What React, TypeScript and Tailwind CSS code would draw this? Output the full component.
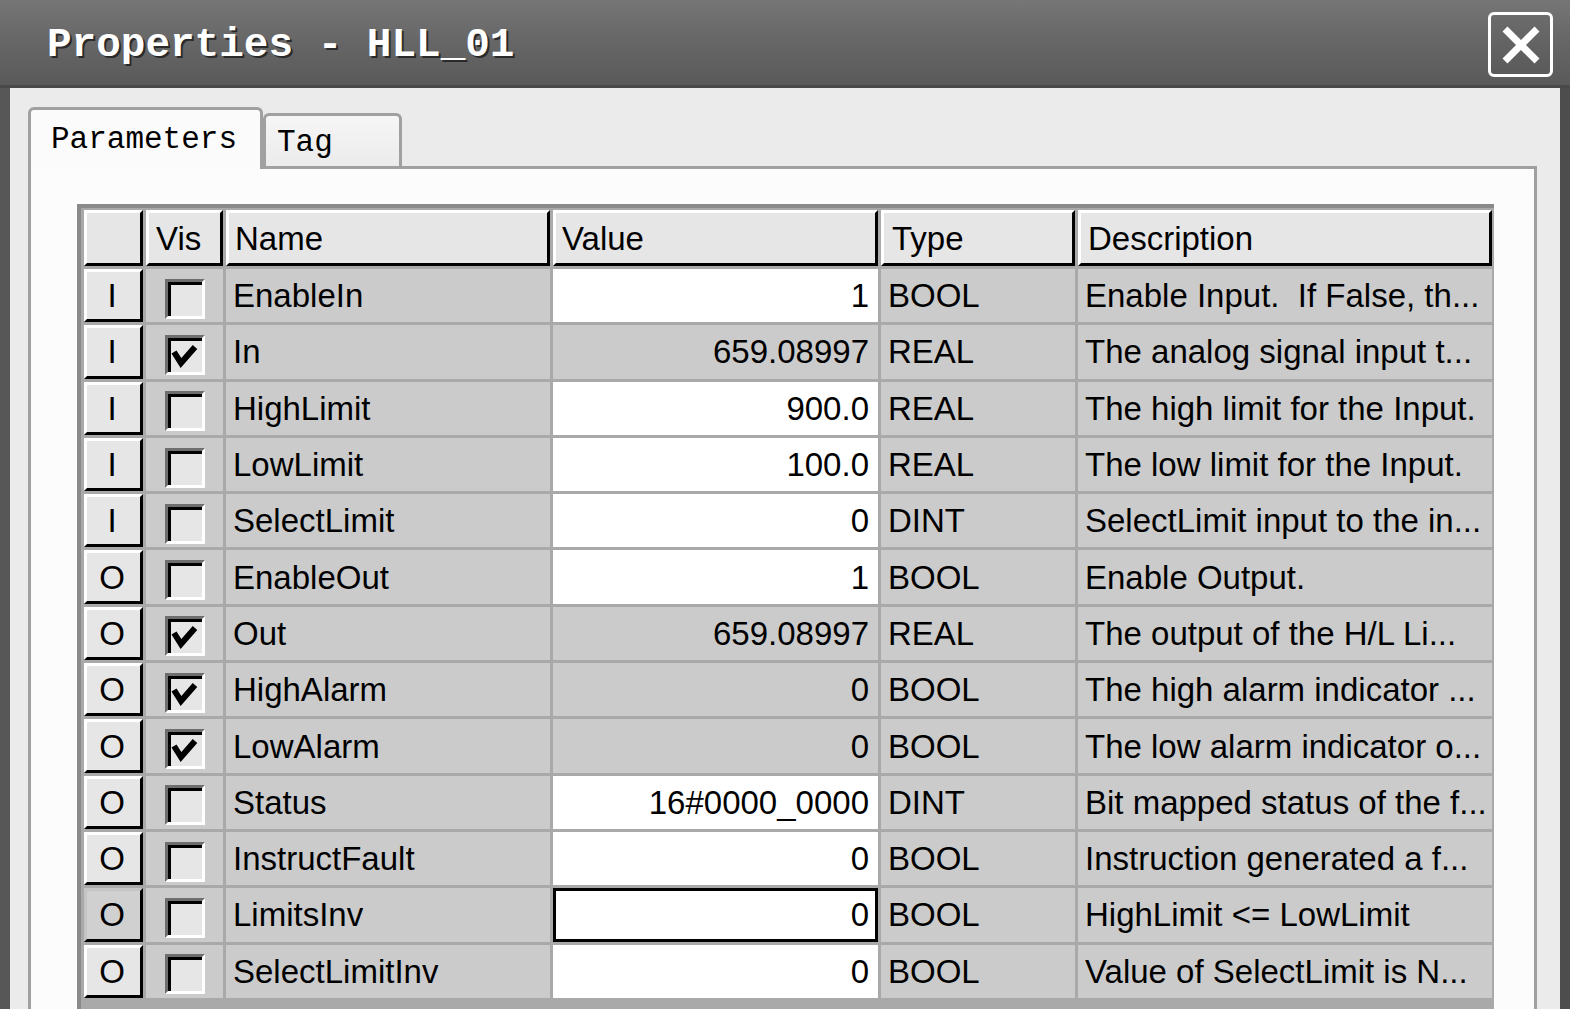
import React from "react";

type Row = {
  io: string;
  vis: boolean;
  name: string;
  value: string;
  editable: boolean;
  type: string;
  desc: string;
  selected?: boolean;
};

const rows: Row[] = [
  { io: "I", vis: false, name: "EnableIn", value: "1", editable: true, type: "BOOL", desc: "Enable Input.  If False, th..." },
  { io: "I", vis: true, name: "In", value: "659.08997", editable: false, type: "REAL", desc: "The analog signal input t..." },
  { io: "I", vis: false, name: "HighLimit", value: "900.0", editable: true, type: "REAL", desc: "The high limit for the Input." },
  { io: "I", vis: false, name: "LowLimit", value: "100.0", editable: true, type: "REAL", desc: "The low limit for the Input." },
  { io: "I", vis: false, name: "SelectLimit", value: "0", editable: true, type: "DINT", desc: "SelectLimit input to the in..." },
  { io: "O", vis: false, name: "EnableOut", value: "1", editable: true, type: "BOOL", desc: "Enable Output." },
  { io: "O", vis: true, name: "Out", value: "659.08997", editable: false, type: "REAL", desc: "The output of the H/L Li..." },
  { io: "O", vis: true, name: "HighAlarm", value: "0", editable: false, type: "BOOL", desc: "The high alarm indicator ..." },
  { io: "O", vis: true, name: "LowAlarm", value: "0", editable: false, type: "BOOL", desc: "The low alarm indicator o..." },
  { io: "O", vis: false, name: "Status", value: "16#0000_0000", editable: true, type: "DINT", desc: "Bit mapped status of the f..." },
  { io: "O", vis: false, name: "InstructFault", value: "0", editable: true, type: "BOOL", desc: "Instruction generated a f..." },
  { io: "O", vis: false, name: "LimitsInv", value: "0", editable: true, type: "BOOL", desc: "HighLimit <= LowLimit", selected: true },
  { io: "O", vis: false, name: "SelectLimitInv", value: "0", editable: true, type: "BOOL", desc: "Value of SelectLimit is N..." },
];

const sans = "font-['Liberation_Sans',Arial,sans-serif]";
const mono = "font-['Liberation_Mono','Courier_New',monospace]";

function Checkbox({ checked }: { checked: boolean }) {
  return (
    <div className="mt-[6px] w-[40px] h-[40px] border-t-[3px] border-l-[3px] border-t-[#6e6e6e] border-l-[#6e6e6e] border-r-[3px] border-b-[3px] border-r-white border-b-white">
      <div className="w-full h-full border-t-[3px] border-l-[3px] border-black bg-[#e6e6e6]">
        {checked && (
          <svg width="31" height="31" viewBox="0 0 31 31">
            <polyline points="3,11 10,22 24,6" fill="none" stroke="black" strokeWidth="6" strokeLinejoin="miter" />
          </svg>
        )}
      </div>
    </div>
  );
}

const hdr =
  "h-[56px] bg-[#e6e6e6] border-t-[3px] border-l-[3px] border-white border-b-[3px] border-r-[3px] border-b-black border-r-black flex items-center text-[33px] text-black leading-none";

export default function App() {
  return (
    <div className={`w-[1570px] h-[1009px] overflow-hidden bg-[#555] flex flex-col ${sans}`}>
      {/* Title bar */}
      <div className="h-[88px] shrink-0 flex items-center justify-between pl-[47px] pr-[17px] bg-gradient-to-b from-[#767676] via-[#666666] to-[#5a5a5a] border-b-[3px] border-[#4a4a4a]">
        <div
          className={`${mono} font-bold text-[41px] text-white leading-none pt-[6px] [text-shadow:2px_2px_0_#2a2a2a]`}
        >
          Properties - HLL_01
        </div>
        <div className="w-[65px] h-[65px] mt-[4px] rounded-[6px] border-[3px] border-white bg-gradient-to-b from-[#6c6c6c] to-[#5a5a5a] flex items-center justify-center">
          <svg width="40" height="40" viewBox="0 0 40 40">
            <path d="M4 4 L36 36 M36 4 L4 36" stroke="white" strokeWidth="7" />
          </svg>
        </div>
      </div>

      {/* Body */}
      <div className="flex-1 flex min-h-0">
        <div className="w-[10px] bg-[#575757]" />
        <div className="flex-1 bg-[#ebebeb] pl-[18px] pr-[23px] pt-[19px] flex flex-col min-h-0">
          {/* Tabs */}
          <div className="flex items-end h-[59px] shrink-0">
            <div
              className={`relative z-10 w-[235px] h-[62px] -mb-[3px] bg-[#fbfbfb] border-[3px] border-b-0 border-[#a0a0a0] rounded-t-[6px] pl-[20px] pt-[12px] ${mono} text-[31px] leading-[36px] text-black`}
            >
              Parameters
            </div>
            <div
              className={`w-[139px] h-[53px] bg-gradient-to-b from-[#f6f6f6] to-[#ebebeb] border-[3px] border-b-0 border-[#a0a0a0] rounded-t-[6px] pl-[11px] pt-[9px] ${mono} text-[31px] leading-[36px] text-black`}
            >
              Tag
            </div>
          </div>

          {/* Panel */}
          <div className="flex-1 min-h-0 bg-[#fcfcfc] border-[3px] border-b-0 border-[#a0a0a0] pl-[46px] pt-[35px] flex flex-col">
            <div className="w-[1417px] flex-1 bg-[#a9a9a9] border-l-[4px] border-t-[4px] border-[#8a8a8a] pl-[3px] pt-[2px] pr-[2px]">
              <div className="grid grid-cols-[59px_77px_324px_325px_194px_414px] gap-x-[3px] gap-y-[3px] auto-rows-[53.3px] [grid-template-rows:56px]">
                {/* Header */}
                <div className={hdr} />
                <div className={`${hdr} pl-[7px]`}>Vis</div>
                <div className={`${hdr} pl-[6px]`}>Name</div>
                <div className={`${hdr} pl-[6px]`}>Value</div>
                <div className={`${hdr} pl-[8px]`}>Type</div>
                <div className={`${hdr} pl-[7px]`}>Description</div>

                {rows.map((r) => (
                  <React.Fragment key={r.name}>
                    <div
                      className={`flex items-center justify-center pr-[3px] text-[33px] leading-none text-black border-b-[3px] border-r-[3px] border-b-black border-r-black ${
                        r.selected
                          ? "bg-[#d0d0d0] border-t-[3px] border-l-[3px] border-t-[#c4c4c4] border-l-[#c4c4c4]"
                          : "bg-[#e6e6e6] border-t-[3px] border-l-[3px] border-t-white border-l-white"
                      }`}
                    >
                      {r.io}
                    </div>
                    <div className="bg-[#cbcbcb] flex items-center justify-center pl-[1px]">
                      <Checkbox checked={r.vis} />
                    </div>
                    <div className="bg-[#cbcbcb] flex items-center pl-[7px] text-[33px] leading-none text-black whitespace-pre overflow-hidden">
                      {r.name}
                    </div>
                    <div
                      className={`flex items-center justify-end text-[33px] leading-none text-black whitespace-pre overflow-hidden ${
                        r.editable ? "bg-white" : "bg-[#cbcbcb]"
                      } ${r.selected ? "border-[3px] border-black pr-[6px]" : "pr-[9px]"}`}
                    >
                      {r.value}
                    </div>
                    <div className="bg-[#cbcbcb] flex items-center pl-[7px] text-[33px] leading-none text-black">
                      {r.type}
                    </div>
                    <div className="bg-[#cbcbcb] flex items-center pl-[7px] text-[33px] leading-none text-black whitespace-pre overflow-hidden">
                      {r.desc}
                    </div>
                  </React.Fragment>
                ))}
              </div>
            </div>
          </div>
        </div>
        <div className="w-[10px] bg-[#4d4d4d]" />
      </div>
    </div>
  );
}
